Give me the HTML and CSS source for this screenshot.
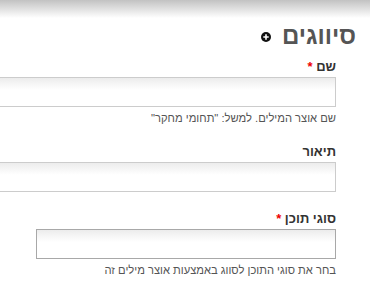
FILE: index.html
```html
<!DOCTYPE html>
<html lang="he" dir="rtl">
<head>
    <meta charset="UTF-8">
    <title>סיווגים</title>
    <link rel="stylesheet" href="styles.css">
</head>
<body>
    <div class="page">
        <h1 class="title">
            <span>סיווגים</span>
            <svg class="add-icon" width="10" height="10" viewBox="0 0 10 10">
                <circle cx="5" cy="5" r="5" fill="#111"/>
                <path d="M5 2.3v5.4M2.3 5h5.4" stroke="#fff" stroke-width="1.6"/>
            </svg>
        </h1>

        <div class="form">
            <div class="form-item">
                <label for="name">שם <span class="required">*</span></label>
                <input type="text" id="name" class="form-text wide">
                <div class="description">שם אוצר המילים. למשל: "תחומי מחקר"</div>
            </div>

            <div class="form-item">
                <label for="desc">תיאור</label>
                <input type="text" id="desc" class="form-text wide">
            </div>

            <div class="form-item">
                <label for="types">סוגי תוכן <span class="required">*</span></label>
                <input type="text" id="types" class="form-text narrow">
                <div class="description">בחר את סוגי התוכן לסווג באמצעות אוצר מילים זה</div>
            </div>
        </div>
    </div>
</body>
</html>
```

FILE: styles.css
```css
html, body {
    margin: 0;
    padding: 0;
}
body {
    background: linear-gradient(#c2c2c2, #fff 18px) no-repeat;
    background-color: #fff;
    font-family: 'Liberation Sans', Arial, sans-serif;
    color: #333;
    overflow: hidden;
    height: 287px;
}
.page {
    padding: 21px 14px 0 0;
}
.title {
    display: flex;
    align-items: center;
    gap: 11px;
    margin: 0 0 8px;
    font-size: 24px;
    font-weight: bold;
    line-height: 30px;
    color: #555;
}
.add-icon {
    display: block;
    margin-top: 1px;
}
.form {
    margin-right: 20px;
}
.form-item {
    margin-bottom: 19px;
}
.form-item label {
    display: block;
    font-size: 13px;
    font-weight: bold;
    line-height: 16px;
    margin-bottom: 2px;
    color: #333;
}
.required {
    color: #e00;
}
.form-text {
    display: block;
    box-sizing: border-box;
    height: 30px;
    margin: 0;
    padding: 4px;
    border: 1px solid #ccc;
    border-radius: 0;
    background: linear-gradient(#ececec, #fff 12px);
    font-family: inherit;
    font-size: 12px;
}
.form-text.wide {
    width: 400px;
}
.form-text.narrow {
    width: 300px;
    border-color: #a8a8a8;
}
.description {
    font-size: 11.2px;
    line-height: 14px;
    margin: 4px 0 16px;
    color: #555;
}
```
